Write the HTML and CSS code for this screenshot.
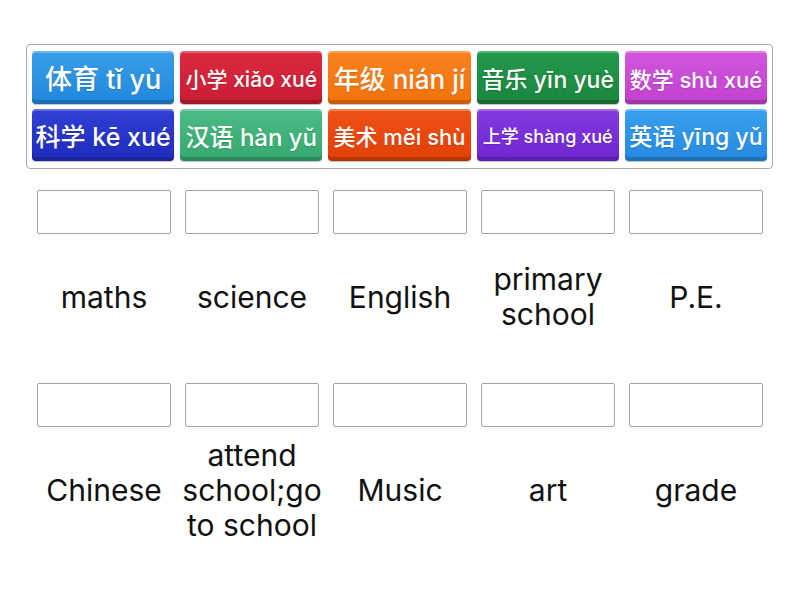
FILE: index.html
```html
<!DOCTYPE html>
<html lang="zh">
<head>
<meta charset="utf-8">
<title>Match up</title>
<link rel="stylesheet" href="styles.css">
</head>
<body>
<div class="page">
  <div class="bank">
    <div class="tile c-blue s27">体育 tǐ yù</div>
    <div class="tile c-red s21">小学 xiǎo xué</div>
    <div class="tile c-orange s26">年级 nián jí</div>
    <div class="tile c-green s23">音乐 yīn yuè</div>
    <div class="tile c-magenta s22">数学 shù xué</div>
    <div class="tile c-navy s25">科学 kē xué</div>
    <div class="tile c-mint s24">汉语 hàn yǔ</div>
    <div class="tile c-vermilion s22">美术 měi shù</div>
    <div class="tile c-purple s18">上学 shàng xué</div>
    <div class="tile c-sky s23">英语 yīng yǔ</div>
  </div>
  <div class="targets">
    <div class="cell"><div class="box"></div><div class="label">maths</div></div>
    <div class="cell"><div class="box"></div><div class="label">science</div></div>
    <div class="cell"><div class="box"></div><div class="label">English</div></div>
    <div class="cell"><div class="box"></div><div class="label">primary school</div></div>
    <div class="cell"><div class="box"></div><div class="label">P.E.</div></div>
    <div class="cell"><div class="box"></div><div class="label">Chinese</div></div>
    <div class="cell"><div class="box"></div><div class="label">attend school;go to school</div></div>
    <div class="cell"><div class="box"></div><div class="label">Music</div></div>
    <div class="cell"><div class="box"></div><div class="label">art</div></div>
    <div class="cell"><div class="box"></div><div class="label">grade</div></div>
  </div>
</div>
</body>
</html>
```
FILE: styles.css
```css
html, body {
  margin: 0;
  padding: 0;
  background: #ffffff;
}
body {
  font-family: "Inter", "Noto Sans CJK SC", sans-serif;
  color: #111111;
}
.page {
  width: 800px;
  height: 600px;
  padding-top: 44px;
  box-sizing: border-box;
}
.bank {
  margin-left: 26px;
  width: 747px;
  height: 125px;
  box-sizing: border-box;
  border: 1px solid #a9a9a9;
  border-radius: 4px;
  padding: 6px 5px 6px 5px;
  display: grid;
  grid-template-columns: repeat(5, 1fr);
  grid-template-rows: 53px 52px;
  column-gap: 6px;
  row-gap: 5px;
}
.tile {
  display: flex;
  align-items: center;
  justify-content: center;
  border-radius: 4px;
  color: #ffffff;
  font-family: "Inter", "Noto Sans CJK SC", sans-serif;
  font-weight: 500;
  white-space: nowrap;
  box-shadow: inset 0 2px 0 rgba(255,255,255,0.25), inset 0 -4px 0 rgba(0,0,0,0.18), 0 1px 1px rgba(0,0,0,0.25);
  text-shadow: 0 1px 1px rgba(0,0,0,0.15);
}
.s27 { font-size: 27px; }
.s26 { font-size: 26px; }
.s25 { font-size: 25px; }
.s24 { font-size: 24px; }
.s23 { font-size: 23px; }
.s22 { font-size: 22px; }
.s21 { font-size: 21px; }
.s18 { font-size: 18px; }
.c-blue { background: linear-gradient(#3a9ee8, #1f87dc); }
.c-red { background: linear-gradient(#dc2a40, #c91c33); }
.c-orange { background: linear-gradient(#fb8320, #f27109); }
.c-green { background: linear-gradient(#24984c, #1a853e); }
.c-magenta { background: linear-gradient(#d256dc, #c241d0); }
.c-navy { background: linear-gradient(#2f40d4, #1f2bbd); }
.c-mint { background: linear-gradient(#4dbb84, #35a86f); }
.c-vermilion { background: linear-gradient(#ef5216, #e13f06); }
.c-purple { background: linear-gradient(#8439e0, #6f26d2); }
.c-sky { background: linear-gradient(#39a0ee, #2489e0); }
.targets {
  margin-left: 30px;
  margin-top: 21px;
  width: 740px;
  display: grid;
  grid-template-columns: repeat(5, 148px);
}
.cell {
  display: flex;
  flex-direction: column;
  align-items: center;
  height: 193px;
}
.box {
  width: 134px;
  height: 44px;
  box-sizing: border-box;
  border: 1px solid #a3a3a3;
  border-radius: 2px;
  background: #ffffff;
}
.label {
  height: 126px;
  width: 148px;
  display: flex;
  align-items: center;
  justify-content: center;
  text-align: center;
  font-size: 30px;
  line-height: 35px;
  color: #111111;
}
```
